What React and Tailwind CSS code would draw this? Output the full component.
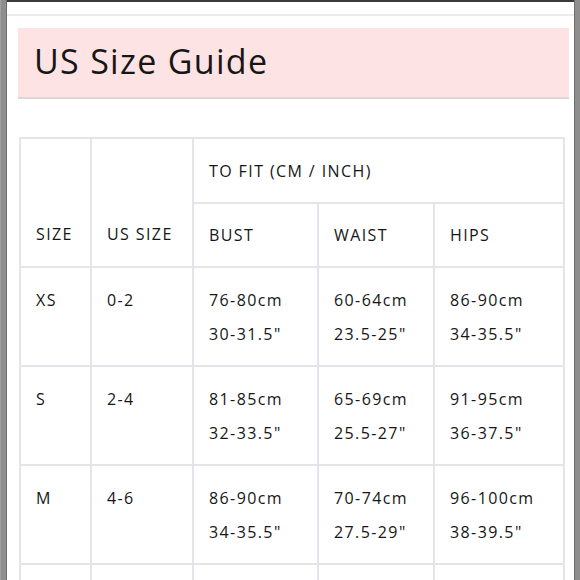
const rows = [
  { size: 'XS', us: '0-2', bust: ['76-80cm', '30-31.5"'], waist: ['60-64cm', '23.5-25"'], hips: ['86-90cm', '34-35.5"'] },
  { size: 'S', us: '2-4', bust: ['81-85cm', '32-33.5"'], waist: ['65-69cm', '25.5-27"'], hips: ['91-95cm', '36-37.5"'] },
  { size: 'M', us: '4-6', bust: ['86-90cm', '34-35.5"'], waist: ['70-74cm', '27.5-29"'], hips: ['96-100cm', '38-39.5"'] },
];

const cell = 'border-2 border-[#e4e4ea] align-top pl-[15px]';

function Measure({ v }) {
  return (
    <td className={cell + ' pt-[20px]'}>
      <div className="leading-[24px]">{v[0]}</div>
      <div className="leading-[24px] mt-[10px]">{v[1]}</div>
    </td>
  );
}

export default function App() {
  return (
    <div
      className="flex w-[580px] h-[580px] overflow-hidden bg-white text-[#161616]"
      style={{ fontFamily: '"Open Sans", "Liberation Sans", sans-serif' }}
    >
      <div className="w-[7px] shrink-0 bg-[#8e8e8e] border-l-[1px] border-l-[#a0a0a0] border-r-[1px] border-r-[#6e6e6e]" />
      <div className="flex-1 flex flex-col border-t-2 border-[#3a3a3a]">
        <div className="h-[14px] shrink-0 border-b-[2px] border-[#ececf0]" />
        <div className="ml-[11px] mr-[5px] mt-[12px] h-[71px] shrink-0 bg-[#fde3e3] border-b-[2px] border-[#dcd6d6] flex items-center pl-[16px]">
          <h1 className="text-[34px] font-[500] tracking-[1.3px] pb-[3px]">US Size Guide</h1>
        </div>
        <table className="ml-[12px] mt-[38px] border-collapse table-fixed w-[544px] text-[16px] font-[500] tracking-[1.4px]">
          <colgroup>
            <col className="w-[71px]" />
            <col className="w-[102px]" />
            <col className="w-[125px]" />
            <col className="w-[116px]" />
            <col className="w-[130px]" />
          </colgroup>
          <thead>
            <tr className="h-[65px]">
              <th rowSpan={2} className="border-2 border-[#e4e4ea] text-left font-[500] align-bottom pl-[15px] pb-[20px]">SIZE</th>
              <th rowSpan={2} className="border-2 border-[#e4e4ea] text-left font-[500] align-bottom pl-[15px] pb-[20px]">US SIZE</th>
              <th colSpan={3} className="border-2 border-[#e4e4ea] text-left font-[500] pl-[15px]">TO FIT (CM / INCH)</th>
            </tr>
            <tr className="h-[64px]">
              <th className="border-2 border-[#e4e4ea] text-left font-[500] pl-[15px]">BUST</th>
              <th className="border-2 border-[#e4e4ea] text-left font-[500] pl-[15px]">WAIST</th>
              <th className="border-2 border-[#e4e4ea] text-left font-[500] pl-[15px]">HIPS</th>
            </tr>
          </thead>
          <tbody>
            {rows.map((r) => (
              <tr key={r.size} className="h-[99px]">
                <td className={cell + ' pt-[20px] leading-[24px]'}>{r.size}</td>
                <td className={cell + ' pt-[20px] leading-[24px]'}>{r.us}</td>
                <Measure v={r.bust} />
                <Measure v={r.waist} />
                <Measure v={r.hips} />
              </tr>
            ))}
            <tr className="h-[99px]">
              <td className={cell} />
              <td className={cell} />
              <td className={cell} />
              <td className={cell} />
              <td className={cell} />
            </tr>
          </tbody>
        </table>
      </div>
      <div className="w-[6px] shrink-0 bg-[#8e8e8e] border-l-[1px] border-l-[#6e6e6e]" />
    </div>
  );
}
